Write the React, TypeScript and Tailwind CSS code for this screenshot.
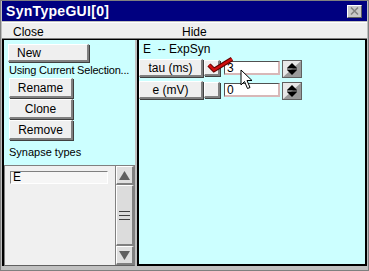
import React from "react";

const Btn = ({ children, className = "" }: { children: React.ReactNode; className?: string }) => (
  <div
    className={
      "bg-[#efefef] border-t border-l border-white border-r-2 border-b-2 border-r-[#808080] border-b-[#808080] shadow-[1px_1px_0_#404040] flex items-center text-[12px] text-black " +
      className
    }
  >
    {children}
  </div>
);

const Spinner = () => (
  <svg width="20" height="18" viewBox="0 0 20 18" className="block">
    <rect x="0" y="0" width="20" height="18" fill="#9a9a9a" />
    <polygon points="0,0 20,0 0,18" fill="#e8e8e8" />
    <rect x="0.5" y="0.5" width="19" height="17" fill="none" stroke="#606060" />
    <polygon points="10,3 15,8 5,8" fill="#000" />
    <rect x="5" y="8.5" width="10" height="1" fill="#000" />
    <polygon points="5,10 15,10 10,15" fill="#000" />
  </svg>
);

export default function App() {
  return (
    <div
      className="w-[369px] h-[271px] bg-[#c0c0c0] border border-[#808080] flex flex-col overflow-hidden relative"
      style={{ fontFamily: '"Liberation Sans", Arial, sans-serif' }}
    >
      {/* Title bar */}
      <div className="h-[20px] bg-[#000080] flex items-center justify-between pl-[4px] pr-[5px] mx-[1px] mt-[0px]">
        <span className="text-white font-bold text-[14px] tracking-[0.3px]">SynTypeGUI[0]</span>
        <div className="w-[15px] h-[13px] bg-[#c8c8c8] border-t border-l border-white border-r border-b border-r-[#606060] border-b-[#606060] flex items-center justify-center">
          <svg width="9" height="8" viewBox="0 0 9 8">
            <path d="M1 0.5 L8 7.5 M8 0.5 L1 7.5" stroke="#808080" strokeWidth="1.5" />
          </svg>
        </div>
      </div>
      {/* Menu bar */}
      <div className="mx-[1px] mt-[1px] h-[17px] bg-[#efefef] border-t border-white border-b border-b-[#808080] grid grid-cols-[180px_1fr] items-center text-[12px] text-black">
        <span className="pl-[11px]">Close</span>
        <span>Hide</span>
      </div>
      {/* Content */}
      <div className="flex flex-1 mx-[1px] mb-[4px] border-t border-black">
        {/* Left panel */}
        <div className="w-[133px] border-l-2 border-black bg-[#ccffff] flex flex-col">
          <div className="pl-[4px] pt-[4px]">
            <Btn className="w-[81px] h-[18px] pl-[8px]">New</Btn>
          </div>
          <div className="pl-[5px] text-[11px] tracking-[-0.2px] whitespace-nowrap h-[15px] leading-[15px] mt-[1px] text-black">
            Using Current Selection...
          </div>
          <div className="pl-[5px] flex flex-col gap-[1px]">
            <Btn className="w-[64px] h-[20px] justify-center">Rename</Btn>
            <Btn className="w-[64px] h-[20px] justify-center">Clone</Btn>
            <Btn className="w-[64px] h-[20px] justify-center">Remove</Btn>
          </div>
          <div className="pl-[5px] text-[11px] whitespace-nowrap mt-[5px] h-[15px] leading-[15px] text-black">Synapse types</div>
          {/* list box */}
          <div className="mt-[5px] flex-1 bg-[#f0f0f0] border-t border-l border-[#808080] border-r border-b border-r-[#808080] border-b-[#606060] flex">
            <div className="flex-1 pt-[5px] pl-[5px] pr-[7px]">
              <div className="h-[13px] bg-[#f6f6f6] border-t border-l border-[#808080] border-r border-b border-r-white border-b-white text-[12px] leading-[11px] pl-[2px] text-black">
                E
              </div>
            </div>
            <div className="w-[19px] flex flex-col bg-[#a0a0a0] border-l border-[#808080]">
              <div className="h-[19px] bg-[#e0e0e0] border-t border-l border-white border-r-2 border-b-2 border-r-[#808080] border-b-[#808080] flex items-center justify-center">
                <svg width="11" height="9" viewBox="0 0 11 9"><polygon points="5.5,0 11,9 0,9" fill="#606060" /></svg>
              </div>
              <div className="flex-1 bg-[#dcdcdc] border-t border-l border-white border-r-2 border-b-2 border-r-[#808080] border-b-[#808080] flex items-center justify-center">
                <svg width="11" height="9" viewBox="0 0 11 9">
                  <rect x="0" y="0" width="11" height="1" fill="#404040" />
                  <rect x="0" y="4" width="11" height="1" fill="#404040" />
                  <rect x="0" y="8" width="11" height="1" fill="#404040" />
                </svg>
              </div>
              <div className="h-[19px] bg-[#e0e0e0] border-t border-l border-white border-r-2 border-b-2 border-r-[#808080] border-b-[#808080] flex items-center justify-center">
                <svg width="11" height="9" viewBox="0 0 11 9"><polygon points="0,0 11,0 5.5,9" fill="#606060" /></svg>
              </div>
            </div>
          </div>
        </div>
        {/* Right panel */}
        <div className="flex-1 ml-[2px] border-l-2 border-r-2 border-b-2 border-black bg-[#ccffff] flex flex-col relative">
          <div className="pl-[4px] pt-[2px] text-[12px] h-[17px] leading-[15px] text-black whitespace-pre">E  -- ExpSyn</div>
          <div className="flex flex-col gap-[4px] mt-[2px]">
            {[
              { label: "tau (ms)", value: "3" },
              { label: "e (mV)", value: "0" },
            ].map((r) => (
              <div key={r.label} className="flex items-start h-[18px]">
                <Btn className="w-[64px] h-[18px] justify-center">{r.label}</Btn>
                <Btn className="w-[16px] h-[16px] ml-[1px] mt-[1px]"> </Btn>
                <div className="ml-[4px] mt-[2px] w-[56px] h-[14px] bg-white border-t border-l border-[#505050] border-r-2 border-b-2 border-r-[#d8b8b8] border-b-[#d8b8b8] text-[12px] leading-[12px] pl-[2px] text-black">
                  {r.value}
                </div>
                <div className="ml-[2px] mt-[1px]">
                  <Spinner />
                </div>
              </div>
            ))}
          </div>
          {/* red check mark */}
          <svg className="absolute left-[68px] top-[17px]" width="28" height="16" viewBox="0 0 28 16">
            <path d="M2 8 L7 13 L25 2" fill="none" stroke="#600000" strokeWidth="4.5" strokeLinejoin="miter" />
            <path d="M2 8 L7 13 L25 2" fill="none" stroke="#d01010" strokeWidth="2.5" />
          </svg>
          {/* mouse cursor */}
          <svg className="absolute left-[101px] top-[29px]" width="14" height="22" viewBox="0 0 14 22">
            <path d="M1 1 L1 16 L4.5 12.5 L7.5 19.5 L10 18.5 L7 11.5 L12 11.5 Z" fill="#fff" stroke="#000" strokeWidth="1" />
          </svg>
        </div>
      </div>
    </div>
  );
}
